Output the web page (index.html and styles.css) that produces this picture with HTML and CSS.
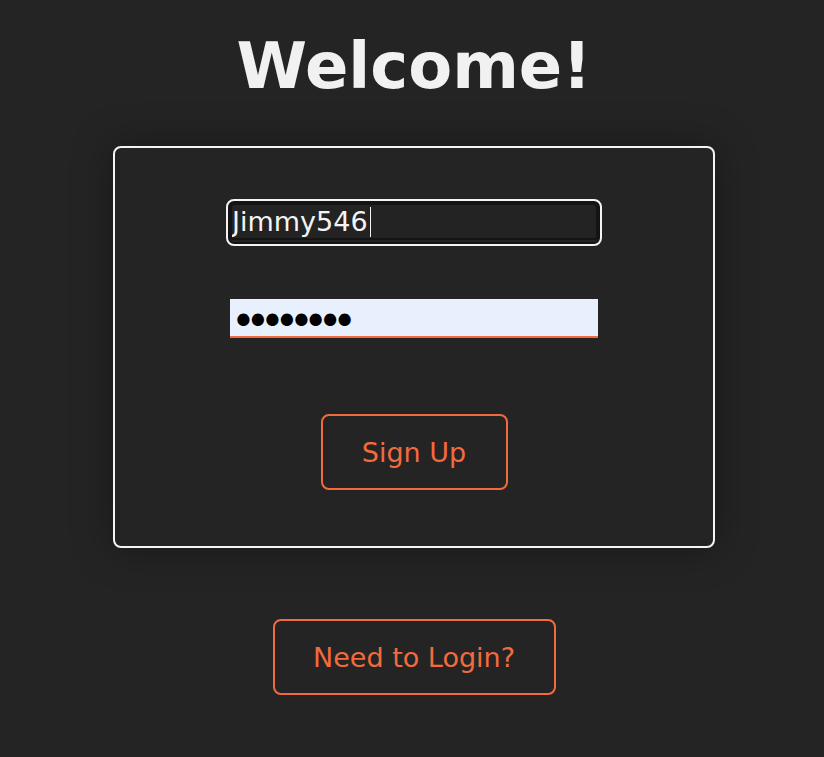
FILE: index.html
```html
<!DOCTYPE html>
<html lang="en">
<head>
<meta charset="utf-8">
<title>Welcome</title>
<link rel="stylesheet" href="styles.css">
</head>
<body>
<main class="page">
  <h1 class="title">Welcome!</h1>
  <form class="card">
    <input class="field field-active" type="text" value="Jimmy546">
    <input class="field field-filled" type="password" value="12345678">
    <button class="btn btn-signup" type="button">Sign Up</button>
  </form>
  <button class="btn btn-login" type="button">Need to Login?</button>
</main>
</body>
</html>
```
FILE: styles.css
```css
html, body {
  margin: 0;
  padding: 0;
  background: #242424;
}

body {
  font-family: "DejaVu Sans", Verdana, sans-serif;
  color: #f1f1f1;
  min-height: 757px;
}

.page {
  display: flex;
  flex-direction: column;
  align-items: center;
  padding-left: 4px;
}

.title {
  margin: 29px 0 0;
  font-size: 64px;
  font-weight: bold;
  line-height: normal;
  color: #f1f1f1;
}

.card {
  box-sizing: border-box;
  width: 602px;
  height: 402px;
  margin-top: 43px;
  border: 2px solid #f4f4f4;
  border-radius: 8px;
  box-shadow: 0 0 40px rgba(0, 0, 0, 0.35);
  display: flex;
  flex-direction: column;
  align-items: center;
  padding-top: 55px;
}

.field {
  box-sizing: border-box;
  width: 368px;
  height: 39px;
  padding: 0 2px;
  font-family: "DejaVu Sans", Verdana, sans-serif;
  font-size: 27px;
  background: transparent;
  border: none;
  border-bottom: 2px solid #f26a3d;
  color: #f4f4f4;
  caret-color: #f4f4f4;
}

.field-active {
  border-bottom-color: transparent;
  border-radius: 4px;
  outline: 2px solid #f4f4f4;
  outline-offset: 2px;
  box-shadow: 0 0 0 2px #141414, inset 0 0 0 2px #141414;
  background-color: #232323;
  background-image: linear-gradient(#f4f4f4, #f4f4f4);
  background-size: 1px 30px;
  background-position: 140px 4px;
  background-repeat: no-repeat;
}

.field-filled {
  margin-top: 57px;
  background: #e8f0fe;
  color: #000;
  border-radius: 0;
  padding: 7px 0 0 1px;
  font-size: 42px;
  letter-spacing: -10.3px;
  line-height: 30px;
}

.btn {
  box-sizing: border-box;
  height: 76px;
  background: transparent;
  border: 2px solid #f26a3d;
  border-radius: 8px;
  color: #f26a3d;
  font-family: "DejaVu Sans", Verdana, sans-serif;
  font-size: 27px;
  cursor: pointer;
}

.btn-signup {
  width: 187px;
  margin-top: 76px;
}

.btn-login {
  width: 283px;
  margin-top: 71px;
}
```
